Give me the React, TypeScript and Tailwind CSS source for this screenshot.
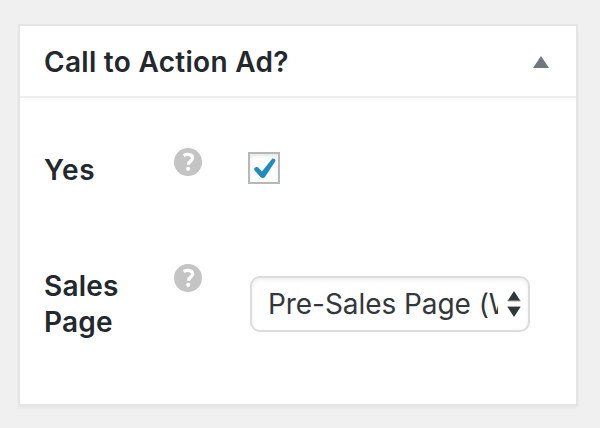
import React from "react";

function HelpIcon() {
  return (
    <svg className="block size-7" viewBox="0 0 28 28" aria-label="Help">
      <circle cx="14" cy="14" r="14" fill="#c4c4c4" />
      <path
        d="M9.6 7.7C12.8 5.8 18.6 5.8 18.6 9.9c0 3.4-4.2 3-4.2 6.8"
        fill="none"
        stroke="#fff"
        strokeWidth="3.3"
      />
      <circle cx="14.2" cy="20.8" r="2.1" fill="#fff" />
    </svg>
  );
}

function Checkbox() {
  return (
    <div className="size-8 border-2 border-[#b4b9be] bg-white shadow-[inset_0_2px_4px_rgba(0,0,0,0.1)]">
      <svg className="block size-7" viewBox="0 0 28 28">
        <path
          d="M4.3 14.5c.8-1.6 3-2 4.2-.7l3.4 3.7L22 5c1.2-1.2 4.1.5 3.4 1.9L15 22.9c-1 1.5-3.4 1.5-4.5 0l-5.8-6.5c-.6-.7-.8-1.2-.4-1.9z"
          fill="#1e8cbe"
        />
      </svg>
    </div>
  );
}

function PageSelect() {
  return (
    <div className="flex h-14 w-[280px] items-center rounded-[10px] border-2 border-[#ddd] bg-white pl-4 shadow-[inset_0_2px_4px_rgba(0,0,0,0.07)]">
      <div className="w-[230px] overflow-hidden whitespace-nowrap text-[28px] leading-9 tracking-[-0.06px] text-[#32373c]">
        Pre-Sales Page (Waitlist)
      </div>
      <svg className="ml-[7.5px] block h-[28px] w-[16px] shrink-0" viewBox="0 0 16 28">
        <path d="M8 1l6.5 10h-13zM8 27l6.5-10h-13z" fill="#32373c" />
        <path d="M1.5 11h13M1.5 16.5h13" stroke="#aaa" />
      </svg>
    </div>
  );
}

export default function App() {
  return (
    <div className="h-[428px] w-[600px] bg-[#f0f0f0] pl-[18px] pt-6 font-['Inter','Liberation_Sans',sans-serif] text-[28px] leading-9 text-[#23282d]">
      <section className="h-[382px] w-[560px] border-2 border-[#e5e5e5] bg-white shadow-[0_2px_2px_rgba(0,0,0,0.04)]">
        <header className="flex h-[72px] items-center justify-between border-b-2 border-[#eee] pl-6 pr-[27px] pt-0.5">
          <h2 className="whitespace-nowrap font-semibold tracking-[0.29px]">Call to Action Ad?</h2>
          <svg className="block h-3 w-4" viewBox="0 0 16 12">
            <path d="M8 0l8 12H0z" fill="#72777c" />
          </svg>
        </header>
        <div className="flex items-start pl-6 pt-[50px]">
          <div className="w-[130px] pt-1 font-semibold tracking-[0.8px]">Yes</div>
          <HelpIcon />
          <div className="ml-[46px] pt-1">
            <Checkbox />
          </div>
        </div>
        <div className="flex items-start pl-6 pt-[76px]">
          <div className="w-[130px] pt-1 font-semibold tracking-[0.2px]">
            Sales
            <br />
            Page
          </div>
          <HelpIcon />
          <div className="ml-12 pt-3">
            <PageSelect />
          </div>
        </div>
      </section>
    </div>
  );
}
